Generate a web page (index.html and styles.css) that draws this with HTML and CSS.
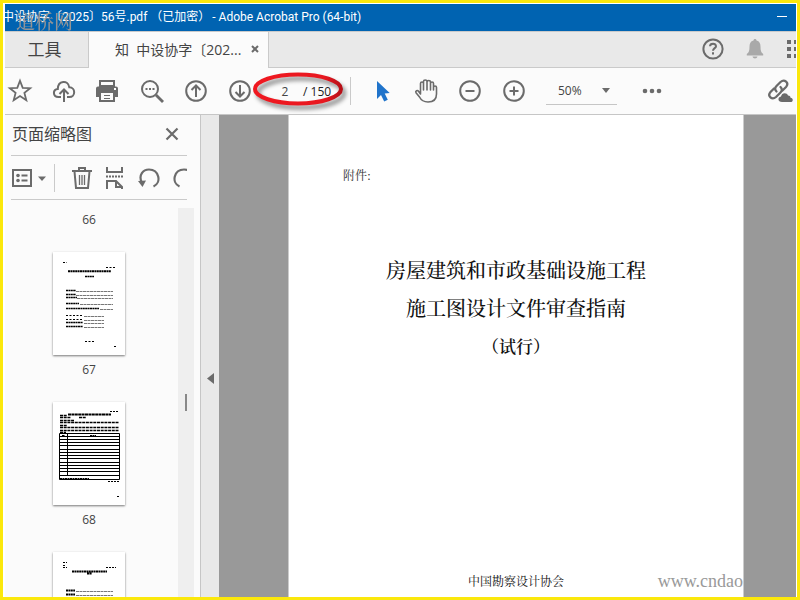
FILE: index.html
```html
<!DOCTYPE html>
<html lang="zh-CN">
<head>
<meta charset="utf-8">
<title>Adobe Acrobat Pro</title>
<link rel="stylesheet" href="styles.css">
</head>
<body>
<div class="app">
  <header class="titlebar">
    <h1 class="window-title"><span>中设协字〔2025〕56号.pdf （已加密）</span><span>- Adobe Acrobat Pro (64-bit)</span></h1>
    <button class="minimize" aria-label="最小化"></button>
    <span class="site-mark">道桥网</span>
  </header>
  <nav class="tabs">
    <button class="tab">工具</button>
    <div class="tab active"><span class="tab-name">知&nbsp; 中设协字〔202...</span><button class="close" aria-label="关闭标签"><svg width="8" height="8" viewBox="0 0 8 8"><path d="M1 1l6 6M7 1L1 7" stroke="#6b6b6b" stroke-width="2"/></svg></button></div>
    <div class="tab-tools">
      <button aria-label="帮助"><svg width="22" height="22" viewBox="0 0 22 22" fill="none" stroke="#6b6b6b" stroke-width="2"><circle cx="11" cy="11" r="9.6"/><path d="M8 8.2c.2-3.300 6-3.300 6 0 0 2-3 2-3 4.600M11 14.300v2.200"/></svg></button>
      <button aria-label="通知"><svg width="20" height="22" viewBox="0 0 20 22" fill="#a9a9a9"><path d="M10 1c1 0 1.500.7 1.500 1.500 3 .8 4 3 4 6 0 4 .5 6 2.700 7.500v1.500H1.800V16c2.200-1.500 2.700-3.500 2.700-7.500 0-3 1-5.200 4-6C8.500 1.700 9 1 10 1zM7.500 18.500h5c-.5 2.500-4.500 2.500-5 0z"/></svg></button>
      <button class="apps" aria-label="应用"><svg width="10" height="20" viewBox="0 0 10 20" fill="#6b6b6b"><path d="M1 1h4v4H1zM8 1h4v4H8zM1 8h4v4H1zM8 8h4v4H8zM1 15h4v4H1zM8 15h4v4H8z"/></svg></button>
    </div>
  </nav>
  <div class="toolbar">
    <button class="tool" aria-label="收藏"><svg width="28" height="28" viewBox="0 0 28 28" fill="none" stroke="#6b6b6b" stroke-width="1.800"><path d="M14 3.800l2.700 7 7.500.4-5.800 4.700 1.900 7.300-6.300-4.100-6.300 4.100 1.900-7.300-5.800-4.700 7.500-.4z"/></svg></button>
    <button class="tool" aria-label="上传"><svg width="28" height="28" viewBox="0 0 28 28" fill="none" stroke="#6b6b6b" stroke-width="2"><path d="M11 20H8.500c-6 0-6-8-.7-8C8 3.500 18 2.500 19.300 10.300c6.500 0 6.500 9.700 0 9.700H17M14 25V13M9.500 17L14 12.500l4.500 4.500"/></svg></button>
    <button class="tool" aria-label="打印"><svg width="28" height="28" viewBox="0 0 28 28"><path d="M6 4h14v5H6z" fill="none" stroke="#6b6b6b" stroke-width="2"/><path d="M4 9.500h18a2 2 0 0 1 2 2V20H2v-8.500a2 2 0 0 1 2-2z" fill="#6b6b6b"/><path d="M6 15h14v9H6z" fill="#fbfbfb" stroke="#6b6b6b" stroke-width="2"/><path d="M10 18.500h6M10 21.500h6" stroke="#6b6b6b"/><path d="M20 11h2v2h-2z" fill="#fff"/></svg></button>
    <button class="tool" aria-label="搜索"><svg width="28" height="28" viewBox="0 0 28 28" fill="none" stroke="#6b6b6b" stroke-width="2"><circle cx="12" cy="12" r="8"/><path d="M18 18l7 7" stroke-width="2.800"/><path d="M7.500 12h9" stroke-dasharray="2 1.500"/></svg></button>
    <button class="tool" aria-label="上一页"><svg width="28" height="28" viewBox="0 0 28 28" fill="none" stroke="#6b6b6b" stroke-width="2"><circle cx="14" cy="14" r="9.800"/><path d="M14 20V9M9.500 13L14 8.500l4.500 4.500"/></svg></button>
    <button class="tool" aria-label="下一页"><svg width="28" height="28" viewBox="0 0 28 28" fill="none" stroke="#6b6b6b" stroke-width="2"><circle cx="14" cy="14" r="9.800"/><path d="M14 8v11M9.500 15l4.500 4.500 4.500-4.500"/></svg></button>
    <div class="page-nav"><input class="page-number" aria-label="页码" value="2"><span>/ 150</span>
      <svg class="highlight" width="100" height="44" viewBox="0 0 100 44" fill="none"><defs><linearGradient id="ring" x1="0" y1="0" x2="1" y2="0"><stop offset="0" stop-color="#f01820"/><stop offset=".8" stop-color="#e81820"/><stop offset="1" stop-color="#b81018"/></linearGradient></defs><ellipse cx="49" cy="20" rx="43" ry="14.500" stroke="url(#ring)" stroke-width="4"/></svg>
    </div>
    <span class="divider"></span>
    <button class="tool" aria-label="选择"><svg width="28" height="28" viewBox="0 0 28 28"><path d="M9 4v18l4-4 3.200 6.500 3.600-1.700-3.100-6.300 5-.5z" fill="#2074cb"/></svg></button>
    <button class="tool" aria-label="手形"><svg width="28" height="28" viewBox="0 0 28 28" fill="none" stroke="#6b6b6b" stroke-width="1.600" stroke-linecap="round" stroke-linejoin="round"><path d="M8.500 16.500V6.500c0-2 3-2 3 0V13 4.500c0-2 3.500-2 3.500 0V13 5c0-2 3.500-2 3.500 0V13 6.500c0-2 3-2 3 0V13v-2.500c0-2 3-2 3 0V17c0 5-3 8-8.500 8-4.500 0-7-2-8.500-5L4 15.800c-1-2 1.500-3 2.500-1.500l2 2.700"/></svg></button>
    <button class="tool" aria-label="缩小"><svg width="28" height="28" viewBox="0 0 28 28" fill="none" stroke="#6b6b6b" stroke-width="2"><circle cx="14" cy="14" r="9.800"/><path d="M9.500 14h9"/></svg></button>
    <button class="tool" aria-label="放大"><svg width="28" height="28" viewBox="0 0 28 28" fill="none" stroke="#6b6b6b" stroke-width="2"><circle cx="14" cy="14" r="9.800"/><path d="M9.500 14h9M14 9.500v9"/></svg></button>
    <label class="zoom"><select aria-label="缩放"><option>50%</option></select><svg width="8" height="5" viewBox="0 0 8 5"><path d="M0 0h8L4 5z" fill="#6b6b6b"/></svg></label>
    <button class="tool more" aria-label="更多"><svg width="20" height="6" viewBox="0 0 20 6" fill="#6b6b6b"><circle cx="3" cy="3" r="2.300"/><circle cx="10" cy="3" r="2.300"/><circle cx="17" cy="3" r="2.300"/></svg></button>
    <button class="tool share" aria-label="共享链接"><svg width="28" height="28" viewBox="0 0 28 28"><g fill="none" stroke="#6b6b6b" stroke-width="2.300" stroke-linecap="round"><path d="M10.500 14.500c-2-2-1.500-4 0-5.500l4-4c4-3.500 9 1 5.500 5l-3.500 3.500"/><path d="M14.500 10c2 2 1.500 4 0 5.500l-4.500 4.500c-4 3.500-9-1-5.500-5L8 11.500"/></g><path d="M16 25c-4.500 0-4.500-5-1-5.500.5-4 6-4.500 7-1 2 0 2.500 1.500 2.500 2.200 3 .3 3 4.300 0 4.300z" fill="#6b6b6b"/></svg></button>
  </div>
  <main class="workspace">
    <aside class="panel">
      <div class="panel-head"><h2>页面缩略图</h2><button class="close" aria-label="关闭面板"><svg width="14" height="14" viewBox="0 0 14 14"><path d="M1.500 1.500l11 11M12.500 1.500l-11 11" stroke="#6b6b6b" stroke-width="2.200"/></svg></button></div>
      <div class="panel-tools">
        <button class="options" aria-label="选项"><svg width="34" height="18" viewBox="0 0 34 18"><path d="M1 1h18v16H1z" fill="none" stroke="#6b6b6b" stroke-width="2"/><circle cx="6" cy="6.500" r="1.800" fill="#6b6b6b"/><circle cx="6" cy="11.500" r="1.800" fill="#6b6b6b"/><path d="M9.500 6.500h6M9.500 11.500h6" stroke="#6b6b6b" stroke-width="2"/><path d="M26 7.500h8l-4 4.500z" fill="#6b6b6b"/></svg></button>
        <span class="divider"></span>
        <button aria-label="删除"><svg width="20" height="24" viewBox="0 0 20 24" fill="none" stroke="#6b6b6b" stroke-width="2"><path d="M0 5h20M7 4V2h6v2M2.500 5.500L4 22h12l1.500-16.500"/><path d="M7.500 9v10M10 9v10M12.500 9v10" stroke-width="1.300"/></svg></button>
        <button aria-label="拆分"><svg width="20" height="24" viewBox="0 0 20 24" fill="none" stroke="#6b6b6b" stroke-width="2"><path d="M2 1v5h15V1M2 23v-8h9l6 6v2M11 15v6h6"/><path d="M1 10.500h17" stroke-dasharray="2 1"/></svg></button>
        <button aria-label="逆时针旋转"><svg width="22" height="24" viewBox="0 0 22 24"><path d="M3.500 16C.5 9 5 3.500 11 3.500c10 0 13 13 4.500 17" fill="none" stroke="#6b6b6b" stroke-width="2.200"/><path d="M0 15l8-.5-3.500 6.500z" fill="#6b6b6b"/></svg></button>
        <button aria-label="顺时针旋转"><svg width="22" height="24" viewBox="0 0 22 24"><path d="M18.500 16C21.500 9 17 3.500 11 3.500c-10 0-13 13-4.500 17" fill="none" stroke="#6b6b6b" stroke-width="2.200"/><path d="M22 15l-8-.5 3.500 6.500z" fill="#6b6b6b"/></svg></button>
      </div>
      <div class="thumb-area">
        <ol class="thumbs">
          <li><span class="sheet-end"></span><span class="num">66</span></li>
          <li><svg class="sheet" width="72" height="103" viewBox="0 0 72 103" fill="none" stroke="#000"><g stroke-width="1.500" stroke-dasharray="2 .4"><path d="M15 19.200h43" stroke-width="2"/><path d="M32 24.500h9"/><path d="M13 38.500h10M13 42.500h10M13 45.500h11M13 51.500h13M13 56.500h33M13 70.500h17M13 74.500h17"/></g><path d="M10 10.500h4M53 15.500h10M32 89.500h9M61 94.500h3M13 63.500h17M13 67.500h17" stroke-dasharray="2 1.500"/><path d="M23 39.500h37M23 43.500h37M24 46.500h36M27 52.500h33M47 57.500h13M31 64.500h20M31 68.500h20M31 71.500h20M31 75.500h20" stroke="#777" stroke-dasharray="3 .5"/></svg><span class="num">67</span></li>
          <li><svg class="sheet" width="72" height="103" viewBox="0 0 72 103" fill="none" stroke="#000"><path d="M57 9.500h9M55 79.500h12M64 94.500h3" stroke-dasharray="2 1"/><path d="M15 12.500h43" stroke-width="2" stroke-dasharray="3 .4"/><path d="M7 13.500h7M7 15.500h11M26 15.500h7M7 18.500h14M7 20.500h59M7 23.500h7M7 25.500h59M7 28.500h59M7 30.500h6" stroke-width="1.300" stroke-dasharray="3 .7"/><path d="M6.500 31.500h60v46h-60zM14.500 31.500v42M7 34.500h59M7 37.500h59M7 40.500h59M7 43.500h59M7 47.500h59M7 50.500h59M7 53.500h59M7 56.500h59M7 60.500h59M7 63.500h59M7 66.500h59M7 69.500h59M7 73.500h59"/><path d="M9 33.500h3M37 33.500h6M7 76.500h29" stroke-dasharray="2 .5"/></svg><span class="num">68</span></li>
          <li><svg class="sheet" width="72" height="103" viewBox="0 0 72 103" fill="none" stroke="#000"><path d="M10 10.500h4M10 13.500h2M10 15.500h4M53 15.500h10" stroke-dasharray="2 1"/><path d="M19 19.500h35M34 21.500h5M13 38.500h9M13 42.500h9" stroke-width="2" stroke-dasharray="2 .4"/><path d="M23 39.500h37M23 43.500h37" stroke="#777" stroke-dasharray="3 .5"/></svg></li>
        </ol>
        <div class="track"><span class="grip"></span></div>
      </div>
    </aside>
    <button class="splitter" aria-label="折叠面板"><svg width="7" height="11" viewBox="0 0 7 11"><path d="M7 0v11L0 5.500z" fill="#6b6b6b"/></svg></button>
    <section class="canvas">
      <article class="page">
        <p class="attach">附件:</p>
        <h2 class="doc-title">房屋建筑和市政基础设施工程<br>施工图设计文件审查指南</h2>
        <p class="trial">（试行）</p>
        <p class="issuer">中国勘察设计协会</p>
        <span class="url-mark">www.cndao</span>
      </article>
    </section>
  </main>
</div>
</body>
</html>
```
FILE: styles.css
```css
* { box-sizing: border-box; }
body, h1, h2, p, ol { margin: 0; padding: 0; }
body { font-family: "Open Sans", "Noto Sans CJK SC", sans-serif; font-size: 12px; color: #444; }
button { margin: 0; padding: 0; border: 0; background: none; font: inherit; color: inherit; }
svg { display: block; flex: none; }

.app { display: flex; flex-direction: column; height: 100vh; overflow: hidden; border: 3px solid #fbe80c; padding: 1px 1px 0 2px; background: #fff; }

.titlebar { position: relative; flex: none; display: flex; align-items: center; justify-content: space-between; height: 27px; padding-right: 9px; background: #0063b1; color: #fff; overflow: hidden; }
.window-title { display: flex; gap: 2px; margin-left: -3px; margin-bottom: 2px; font-family: Roboto, "Noto Sans CJK SC", sans-serif; font-size: 12px; font-weight: 400; line-height: 20px; white-space: pre; }
.minimize { width: 10px; height: 1px; margin-bottom: 3px; background: #fff; }
.site-mark { position: absolute; left: 11px; top: 6px; font: 500 19px/22px "Noto Serif CJK SC", serif; color: #a39a94; opacity: .9; }

.tabs { flex: none; display: flex; height: 37px; border-top: 1px solid #cacaca; background: #e9e9e9; box-shadow: inset 0 -1px #cacaca; }
.tab { display: flex; align-items: center; justify-content: center; width: 84px; padding: 0 4px 3px 0; border-right: 1px solid #cacaca; font-size: 17px; }
.tab.active { justify-content: space-between; width: 180px; padding: 0 9px 2px 26px; background: #fbfbfb; font-size: 14px; white-space: nowrap; }
.tab-tools { flex: 1; display: flex; align-items: center; justify-content: flex-end; gap: 21px; padding-bottom: 2px; }

.toolbar { flex: none; display: flex; align-items: center; gap: 16px; height: 47px; padding-left: 1px; border-bottom: 1px solid #c6c6c6; background: #fbfbfb; }
.tool { flex: none; display: flex; align-items: center; justify-content: center; width: 28px; height: 28px; }
.more { width: 34px; }
.share { margin-left: auto; margin-right: 2px; }
.page-nav { position: relative; display: flex; align-items: center; gap: 3px; width: 64px; color: #222; white-space: nowrap; }
.page-number { width: 30px; padding: 0; border: 0; background: none; font: inherit; color: #444; text-align: center; }
.highlight { position: absolute; left: -21px; top: -14px; filter: drop-shadow(3px 4px 2px rgba(0, 0, 0, .45)); pointer-events: none; }
.divider { flex: none; width: 2px; height: 28px; border-left: 1px solid #cacaca; }
.zoom { flex: none; display: flex; align-items: center; justify-content: space-between; width: 71px; height: 28px; margin: 0 2px; padding: 0 7px 0 12px; border-bottom: 1px solid #c6c6c6; }
.zoom select { appearance: none; width: 36px; padding: 0; border: 0; background: none; font: inherit; color: inherit; }

.workspace { flex: 1; display: flex; min-height: 0; }
.panel { flex: none; display: flex; flex-direction: column; width: 196px; border-right: 1px solid #c6c6c6; background: #fbfbfb; }
.panel-head { flex: none; display: flex; align-items: center; justify-content: space-between; height: 41px; margin: 0 13px 0 6px; padding: 0 8px 2px 1px; border-bottom: 1px solid #cacaca; }
.panel-head h2 { font-size: 16px; font-weight: 400; line-height: 24px; }
.panel-tools { flex: none; display: flex; align-items: center; gap: 13px; height: 44px; margin: 0 13px 8px 6px; border-bottom: 1px solid #cacaca; overflow: hidden; }
.panel-tools .options { margin: 0 -5px 0 1px; }
.panel-tools .divider { margin-right: 3px; }
.thumb-area { flex: 1; display: flex; min-height: 0; padding-right: 6px; }
.thumbs { flex: 1; padding-right: 5px; list-style: none; overflow: hidden; }
.thumbs li { display: flex; flex-direction: column; align-items: center; gap: 5px; margin-bottom: 23px; }
.sheet, .sheet-end { width: 72px; background: #fff; box-shadow: 0 1px 2px #777; }
.sheet-end { height: 1px; margin-top: -4px; }
.num { line-height: 19px; }
.track { flex: none; width: 16px; padding: 186px 7px 0; background: #efefef; }
.grip { display: block; height: 17px; background: #888; }
.splitter { flex: none; display: flex; align-items: center; width: 18px; padding: 0 5px 0 6px; background: #e9e9e9; }
.splitter svg { margin-top: 44px; }

.canvas { flex: 1; display: flex; min-width: 0; padding: 0 52px 0 69px; background: #999; }
.page { position: relative; flex: 1; display: flex; flex-direction: column; align-items: center; min-width: 0; padding: 50px 0 6px; border-left: 1px solid #ccc; border-right: 1px solid #ccc; background: #fff; color: #111; font-family: "Noto Serif CJK SC", "Noto Sans CJK SC", serif; white-space: nowrap; overflow: hidden; }
.attach { align-self: flex-start; margin-left: 54px; font-size: 12px; line-height: 20px; color: #333; }
.doc-title { margin-top: 66px; font-size: 20px; font-weight: 500; line-height: 38px; text-align: center; }
.trial { font-size: 17px; font-weight: 600; line-height: 38px; }
.issuer { margin-top: auto; font-size: 12px; line-height: 20px; }
.url-mark { position: absolute; right: 0; bottom: 4px; font: 18px/24px "Liberation Serif", serif; color: #999; }
```
